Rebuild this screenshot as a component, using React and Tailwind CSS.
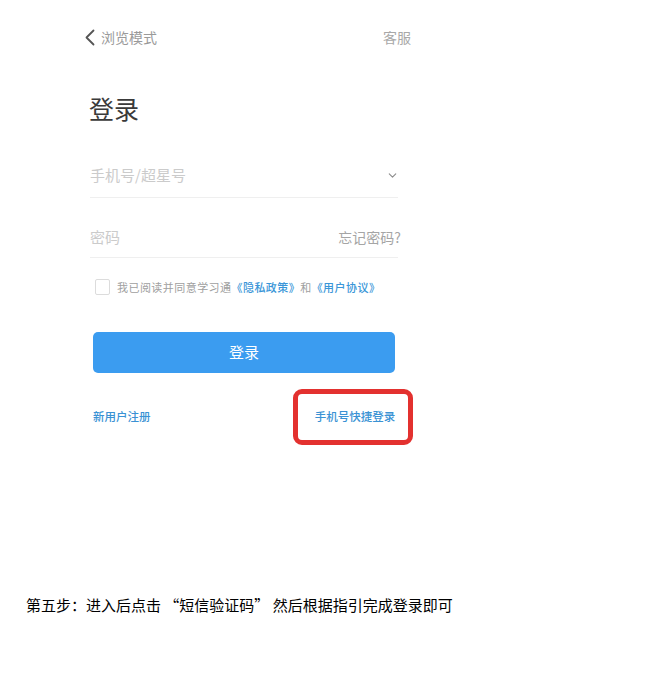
import { ChevronDown } from "lucide-react";

const cjk = { fontFamily: '"Noto Sans CJK SC", "Noto Sans", sans-serif' };

function BackArrow() {
  return (
    <svg width="12" height="17" viewBox="0 0 12 17" fill="none">
      <path d="M9.5 1.5 L2.5 8.5 L9.5 15.5" stroke="#555" strokeWidth="1.8" strokeLinecap="round" strokeLinejoin="round" />
    </svg>
  );
}

export default function App() {
  return (
    <div className="w-[666px] h-[683px] bg-white overflow-hidden" style={cjk}>
      {/* top bar */}
      <div className="ml-[84px] w-[327px] pt-[28px] h-[46px] flex items-center justify-between">
        <div className="flex items-center gap-[5px]">
          <BackArrow />
          <span className="text-[14px] leading-[18px] text-[#9a9a9a]">浏览模式</span>
        </div>
        <span className="text-[14px] leading-[18px] text-[#a8a8a8]">客服</span>
      </div>

      <h1 className="ml-[89px] mt-[49px] h-[26px] text-[25px] leading-[26px] text-[#3a3a3a]">登录</h1>

      <div className="ml-[90px] w-[308px]">
        <div className="mt-[33px] h-[44px] flex items-center justify-between border-b border-[#efefef]">
          <span className="text-[15px] text-[#cbcbcb]">手机号/超星号</span>
          <ChevronDown size={13} strokeWidth={2} className="text-[#8c8c8c] mr-[-1px]" />
        </div>

        <div className="mt-[19px] h-[41px] flex items-center justify-between border-b border-[#efefef]">
          <span className="text-[15px] text-[#cbcbcb]">密码</span>
          <span className="text-[14px] text-[#a5a5a5] mr-[-3px]">忘记密码?</span>
        </div>

        <div className="mt-[21px] ml-[5px] h-[16px] flex items-center gap-[7px]">
          <div className="w-[15px] h-[16px] rounded-[2px] border border-[#dcdcdc]" />
          <span className="text-[11px] tracking-[0.45px] text-[#a0a0a0] whitespace-nowrap">
            我已阅读并同意学习通
            <span className="text-[#3a96d8] font-medium">《隐私政策》</span>和
            <span className="text-[#3a96d8] font-medium">《用户协议》</span>
          </span>
        </div>

        <button className="mt-[37px] ml-[3px] w-[302px] h-[41px] rounded-[5px] bg-[#3b9cf0] text-white text-[15px] flex items-center justify-center">
          登录
        </button>
      </div>

      <div className="mt-[16px] ml-[93px] w-[320px] h-[56px] flex items-center justify-between">
        <span className="text-[11.5px] font-medium text-[#3a92d4]">新用户注册</span>
        <div className="w-[120px] h-[56px] rounded-[9px] border-[5px] border-[#e3312f] flex items-center justify-center">
          <span className="text-[11.5px] font-medium text-[#3a92d4] ml-[4px]">手机号快捷登录</span>
        </div>
      </div>

      <p className="mt-[150px] ml-[26px] text-[15px] leading-[20px] text-black whitespace-nowrap">
        第五步：进入后点击 “短信验证码” 然后根据指引完成登录即可
      </p>
    </div>
  );
}
